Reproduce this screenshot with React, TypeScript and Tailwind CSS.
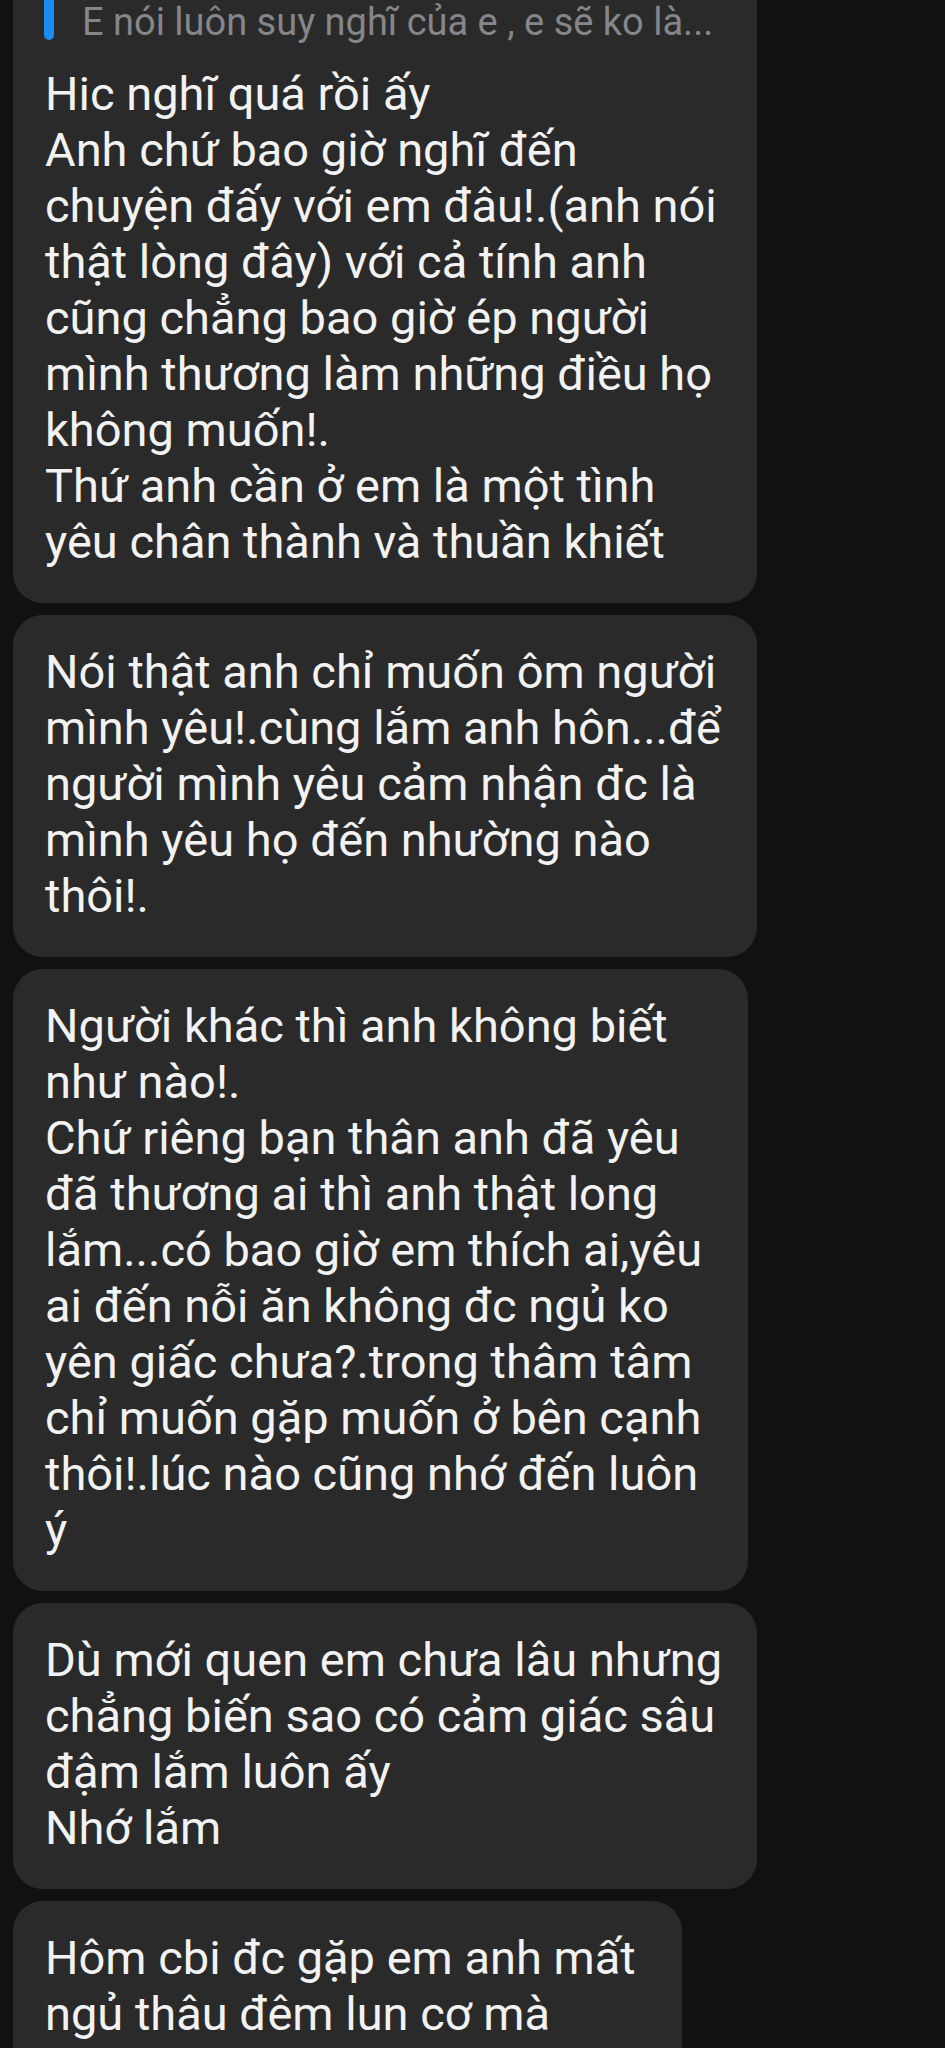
import React from "react";

const bubbles: { w: string; lines: string[] }[] = [
  {
    w: "w-[744px]",
    lines: [
      "Nói thật anh chỉ muốn ôm người",
      "mình yêu!.cùng lắm anh hôn...để",
      "người mình yêu cảm nhận đc là",
      "mình yêu họ đến nhường nào",
      "thôi!.",
    ],
  },
  {
    w: "w-[735px]",
    lines: [
      "Người khác thì anh không biết",
      "như nào!.",
      "Chứ riêng bạn thân anh đã yêu",
      "đã thương ai thì anh thật long",
      "lắm...có bao giờ em thích ai,yêu",
      "ai đến nỗi ăn không đc ngủ ko",
      "yên giấc chưa?.trong thâm tâm",
      "chỉ muốn gặp muốn ở bên cạnh",
      "thôi!.lúc nào cũng nhớ đến luôn",
      "ý",
    ],
  },
  {
    w: "w-[744px]",
    lines: [
      "Dù mới quen em chưa lâu nhưng",
      "chẳng biến sao có cảm giác sâu",
      "đậm lắm luôn ấy",
      "Nhớ lắm",
    ],
  },
  {
    w: "w-[669px]",
    lines: ["Hôm cbi đc gặp em anh mất", "ngủ thâu đêm lun cơ mà", "", ""],
  },
];

const first = [
  "Hic nghĩ quá rồi ấy",
  "Anh chứ bao giờ nghĩ đến",
  "chuyện đấy với em đâu!.(anh nói",
  "thật lòng đây) với cả tính anh",
  "cũng chẳng bao giờ ép người",
  "mình thương làm những điều họ",
  "không muốn!.",
  "Thứ anh cần ở em là một tình",
  "yêu chân thành và thuần khiết",
];

function Lines({ lines }: { lines: string[] }) {
  return (
    <div className="text-[47px] leading-[56px] text-[#f2f2f2] whitespace-nowrap">
      {lines.map((l, i) => (
        <div key={i} className="h-[56px]">
          {l}
        </div>
      ))}
    </div>
  );
}

export default function App() {
  return (
    <div
      className="w-[945px] h-[2048px] overflow-hidden bg-[#111111] pl-[13px]"
      style={{ fontFamily: "Roboto, 'Noto Sans', sans-serif" }}
    >
      <div className="flex flex-col gap-[12px] -mt-[30px]">
        <div className="w-[744px] rounded-[30px] bg-[#2a2a2a] pl-[32px] pt-[20px] pb-[33px]">
          <div className="flex items-start h-[53px]">
            <div className="w-[10px] h-[50px] rounded-full bg-[#1c8cf5] -ml-[1px] shrink-0" />
            <div className="ml-[28px] mt-[12px] text-[38px] leading-[40px] text-[#85858a] whitespace-nowrap">
              E nói luôn suy nghĩ của e , e sẽ ko là...
            </div>
          </div>
          <div className="mt-[23px]">
            <Lines lines={first} />
          </div>
        </div>
        {bubbles.map((b, i) => (
          <div
            key={i}
            className={`${b.w} rounded-[30px] bg-[#2a2a2a] pl-[32px] pt-[29px] pb-[33px] shrink-0`}
          >
            <Lines lines={b.lines} />
          </div>
        ))}
      </div>
    </div>
  );
}
